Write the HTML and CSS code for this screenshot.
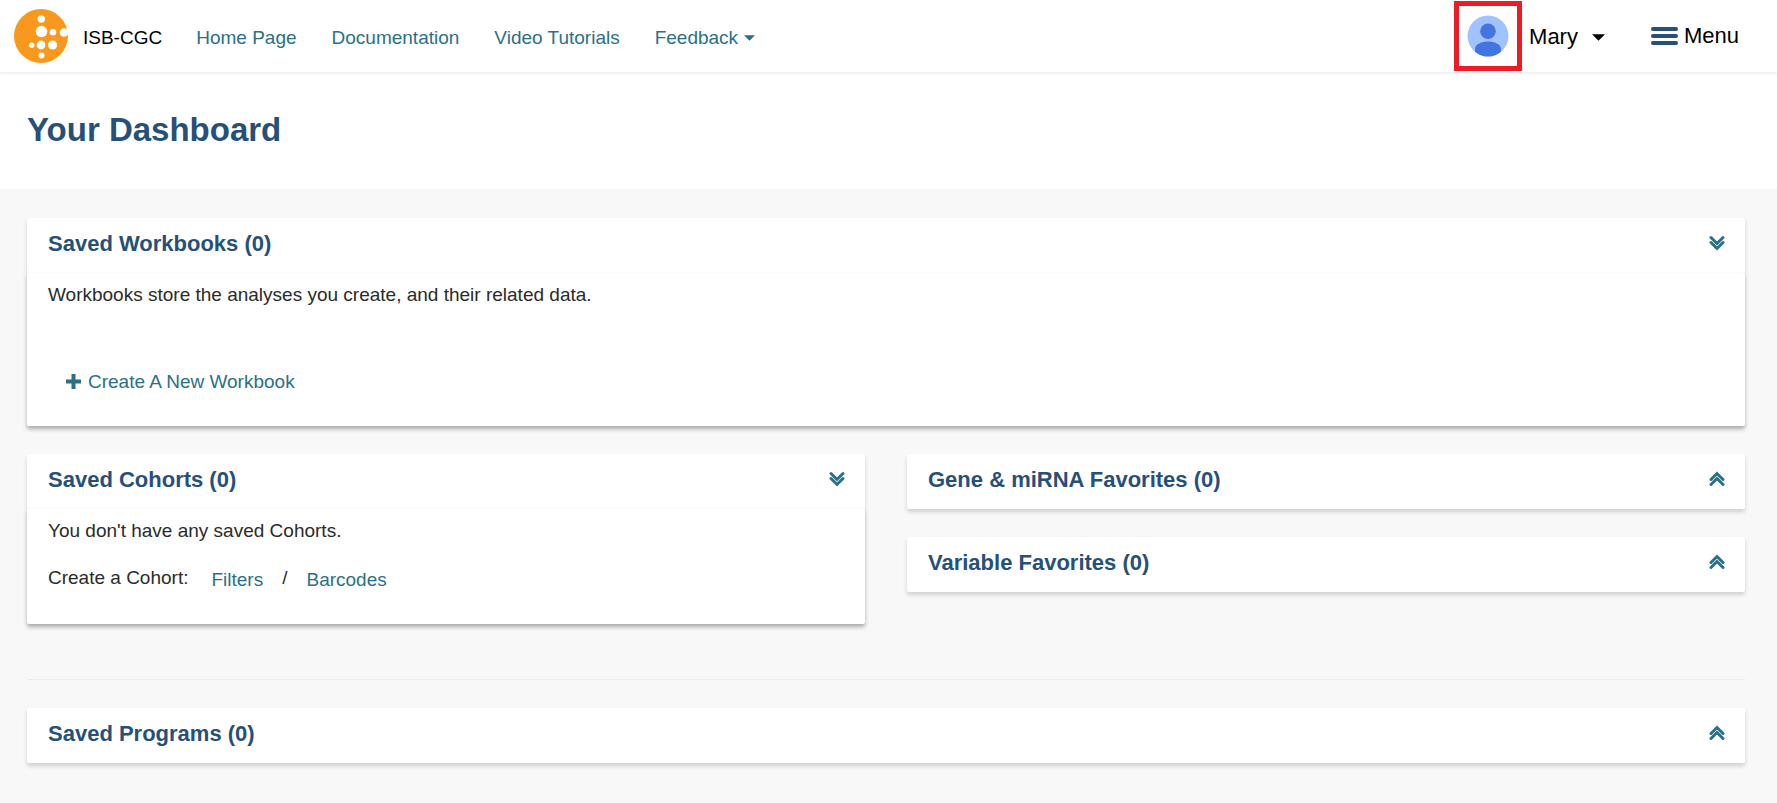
FILE: index.html
```html
<!DOCTYPE html>
<html lang="en">
<head>
<meta charset="utf-8">
<title>ISB-CGC Dashboard</title>
<link rel="stylesheet" href="styles.css">
</head>
<body>
<svg width="0" height="0" class="defs" aria-hidden="true">
  <symbol id="chevrons" viewBox="0 0 16 16">
    <path d="M2 2.500 8 8.500 14 2.500M2 7.500 8 13.500 14 7.500" fill="none" stroke="currentColor" stroke-width="3" stroke-linecap="round"/>
  </symbol>
</svg>
<header class="navbar">
  <a class="brand" href="#">
    <svg class="logo" viewBox="0 0 54 54" aria-hidden="true">
      <circle cx="27" cy="27" r="27" fill="#f8981d"/>
      <g fill="#fff">
        <circle cx="27.3" cy="10" r="3.7"/>
        <circle cx="27.5" cy="22.5" r="5.8"/>
        <circle cx="39" cy="23.2" r="3.3"/>
        <circle cx="50" cy="23.5" r="4.3"/>
        <circle cx="17.8" cy="36.3" r="2.7"/>
        <circle cx="27" cy="36" r="4.4"/>
        <circle cx="38.6" cy="36" r="4.6"/>
        <circle cx="27.5" cy="46.5" r="3"/>
      </g>
    </svg>
    <span>ISB-CGC</span>
  </a>
  <nav class="links">
    <a href="#">Home Page</a>
    <a href="#">Documentation</a>
    <a href="#">Video Tutorials</a>
    <button class="feedback" type="button">Feedback
      <svg class="caret" viewBox="0 0 12 6" aria-hidden="true"><path d="M0 0h12L6 6z" fill="currentColor"/></svg>
    </button>
  </nav>
  <div class="account">
    <button class="user" type="button">
      <span class="highlight">
        <svg class="avatar" viewBox="0 0 42 42" aria-hidden="true">
          <clipPath id="round"><circle cx="21" cy="21" r="20.5"/></clipPath>
          <g clip-path="url(#round)">
            <path d="M0 0h42v42H0z" fill="#a0c3ff"/>
            <circle cx="21" cy="16.3" r="7.8" fill="#4374e0"/>
            <path d="M8 42v-8c0-5 7-7.5 13-7.5S34 29 34 34v8z" fill="#4374e0"/>
          </g>
        </svg>
      </span>
      <span class="user-name">Mary</span>
      <svg class="caret caret-user" viewBox="0 0 12 6" aria-hidden="true"><path d="M0 0h12L6 6z" fill="currentColor"/></svg>
    </button>
    <button class="menu" type="button">
      <svg class="bars" viewBox="0 0 27 18" aria-hidden="true"><g fill="#265078"><rect width="27" height="4" rx="2"/><rect y="7" width="27" height="4" rx="2"/><rect y="14" width="27" height="4" rx="2"/></g></svg>
      <span>Menu</span>
    </button>
  </div>
</header>
<div class="page-title"><h1>Your Dashboard</h1></div>
<main class="dashboard">
  <section class="panel open">
    <div class="panel-head"><h2>Saved Workbooks (0)</h2>
      <button class="toggle" type="button" aria-label="Collapse Saved Workbooks"><svg class="chevrons" aria-hidden="true"><use href="#chevrons"/></svg></button></div>
    <div class="panel-body workbooks">
      <p>Workbooks store the analyses you create, and their related data.</p>
      <a class="create" href="#"><svg class="plus" viewBox="0 0 15 17" aria-hidden="true"><path d="M5.5 0h4v5.5H15v4H9.500V15h-4V9.500H0v-4h5.500z" fill="currentColor"/></svg>Create A New Workbook</a>
    </div>
  </section>
  <div class="columns">
    <section class="panel open">
      <div class="panel-head"><h2>Saved Cohorts (0)</h2>
        <button class="toggle" type="button" aria-label="Collapse Saved Cohorts"><svg class="chevrons" aria-hidden="true"><use href="#chevrons"/></svg></button></div>
      <div class="panel-body cohorts">
        <p>You don't have any saved Cohorts.</p>
        <div class="cohort-links"><span class="cohort-label">Create a Cohort:</span><a href="#">Filters</a><span>/</span><a href="#">Barcodes</a></div>
      </div>
    </section>
    <div class="stack">
      <section class="panel">
        <div class="panel-head"><h2>Gene &amp; miRNA Favorites (0)</h2>
          <button class="toggle" type="button" aria-label="Expand Gene and miRNA Favorites"><svg class="chevrons up" aria-hidden="true"><use href="#chevrons"/></svg></button></div>
      </section>
      <section class="panel">
        <div class="panel-head"><h2>Variable Favorites (0)</h2>
          <button class="toggle" type="button" aria-label="Expand Variable Favorites"><svg class="chevrons up" aria-hidden="true"><use href="#chevrons"/></svg></button></div>
      </section>
    </div>
  </div>
  <hr>
  <section class="panel">
    <div class="panel-head"><h2>Saved Programs (0)</h2>
      <button class="toggle" type="button" aria-label="Expand Saved Programs"><svg class="chevrons up" aria-hidden="true"><use href="#chevrons"/></svg></button></div>
  </section>
</main>
</body>
</html>
```
FILE: styles.css
```css
* { box-sizing: border-box; }
body {
  margin: 0;
  min-height: 100vh;
  background: #f8f8f8;
  color: #2b2b2b;
  font: 19px/28px "Liberation Sans", Arial, sans-serif;
}
h1, h2, p { margin: 0; }
a { color: #2a7187; text-decoration: none; }
button { padding: 0; border: 0; background: none; color: inherit; font: inherit; cursor: pointer; }
svg { display: block; flex: none; }
.defs { display: none; }

.navbar {
  position: relative;
  display: flex;
  align-items: center;
  min-height: 72px;
  padding: 0 38px 0 14px;
  background: #fff;
  box-shadow: 0 2px 2px rgba(0, 0, 0, 0.06);
}
.brand { display: flex; align-items: center; gap: 15px; color: #000; }
.logo { width: 54px; height: 54px; }
.links { display: flex; gap: 35px; margin-left: 34px; padding-top: 4px; }
.brand span { padding-top: 4px; }
.feedback { display: flex; align-items: center; gap: 6px; color: #2a7187; }
.caret { width: 11px; height: 6px; }
.account { display: flex; align-items: center; gap: 46px; margin-left: auto; color: #000; font-size: 22px; }
.user { display: flex; align-items: center; }
.user-name { padding-top: 2px; }
.highlight { padding: 9px 8px; margin-right: 7px; border: 5px solid #ed1c24; }
.avatar { width: 42px; height: 42px; }
.caret-user { width: 13px; height: 7px; margin: 2px 0 0 14px; }
.menu { display: flex; align-items: center; gap: 6px; }
.bars { width: 27px; height: 18px; }

.page-title { padding: 39px 27px 40px; background: #fff; }
h1 { color: #265078; font-size: 33px; line-height: 38px; }

.dashboard { display: flex; flex-direction: column; gap: 28px; padding: 29px 32px 38px 27px; }
.columns { display: grid; grid-template-columns: 1fr 1fr; align-items: start; gap: 42px; }
.stack { display: flex; flex-direction: column; gap: 28px; }
.panel { border-radius: 2px; background: #fff; }
.panel-head {
  display: flex;
  align-items: flex-start;
  justify-content: space-between;
  min-height: 55px;
  padding: 12px 20px 15px 21px;
  border-radius: 2px;
  box-shadow: 0 3px 4px rgba(0, 0, 0, 0.16);
}
h2 { color: #265078; font-size: 22px; line-height: 28px; }
.toggle { padding: 5px 0; color: #2a7187; }
.chevrons { width: 16px; height: 16px; }
.up { transform: rotate(180deg); }
.panel-body {
  position: relative;
  display: flex;
  flex-direction: column;
  align-items: flex-start;
  padding: 8px 21px 30px;
  border-radius: 0 0 2px 2px;
  background: #fff;
  box-shadow: 0 3px 4px rgba(0, 0, 0, 0.32);
}
.workbooks { gap: 59px; }
.cohorts { gap: 17px; }
.create { display: flex; align-items: center; gap: 7px; padding-left: 18px; }
.plus { width: 15px; height: 17px; }
.cohort-links { display: flex; align-items: center; gap: 19px; }
.cohort-label { margin-right: 4px; }
.cohort-links a { margin-top: 4px; }
hr { width: 100%; height: 1px; margin: 27px 0 0; border: 0; background: #ebebeb; }
```
